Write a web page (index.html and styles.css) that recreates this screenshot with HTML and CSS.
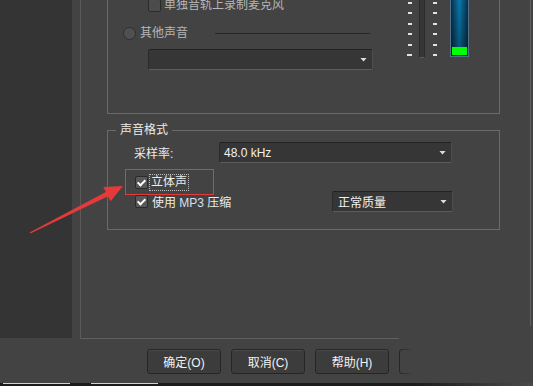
FILE: index.html
```html
<!DOCTYPE html>
<html lang="zh-CN">
<head>
  <meta charset="UTF-8" />
  <meta name="viewport" content="width=device-width, initial-scale=1.0"/>
  <title>录制设置</title>
  <link rel="stylesheet" href="styles.css">
</head>
<body>
  <div class="screen">
    <div class="side"></div>
    <div class="main">
      <div class="frame">
        <div class="group group-top">
          <div class="source-col">
            <div class="row row-mic">
              <span class="check"></span>
              <span class="dim">单独音轨上录制麦克风</span>
            </div>
            <div class="row row-other">
              <span class="radio"></span>
              <span class="dim">其他声音</span>
              <span class="rule"></span>
            </div>
            <div class="select select-source"><span></span><i class="caret"></i></div>
          </div>
          <div class="meter">
            <div class="ticks ticks-left"><i></i><i></i><i></i><i></i><i></i><i></i></div>
            <div class="track"></div>
            <div class="ticks ticks-right"><i></i><i></i><i></i><i></i><i></i><i></i></div>
            <div class="level"><div class="level-fill"></div></div>
          </div>
        </div>

        <fieldset class="group group-format">
          <legend>声音格式</legend>
          <div class="row row-rate">
            <span class="label">采样率:</span>
            <div class="select select-rate"><span>48.0 kHz</span><i class="caret"></i></div>
          </div>
          <div class="row row-check row-stereo">
            <span class="check on"></span>
            <span class="focus">立体声</span>
          </div>
          <div class="row row-check row-mp3">
            <span class="check on"></span>
            <span>使用 <span class="latin">MP3</span> 压缩</span>
            <div class="select select-quality"><span>正常质量</span><i class="caret"></i></div>
          </div>
        </fieldset>
      </div>

      <div class="buttons">
        <button>确定(O)</button>
        <button>取消(C)</button>
        <button>帮助(H)</button>
        <span class="btn-ghost"></span>
      </div>
    </div>
  </div>

  <div class="taskbar">
    <span class="seg"></span>
    <span class="seg seg-2"></span>
  </div>

  <!-- annotation drawn over the screenshot -->
  <div class="note-box"></div>
  <svg class="note-arrow" width="533" height="386" viewBox="0 0 533 386">
    <polygon points="123,186 110.5,201.3 108,196.3 30.4,233.6 29.6,232.4 105.8,191.9 103.3,186.9" fill="#e53a3a"/>
  </svg>
</body>
</html>
```

FILE: styles.css
```css
body {
  margin: 0;
  width: 533px;
  height: 386px;
  overflow: hidden;
  position: relative;
  background: #434343;
  font-family: "Liberation Sans", "Noto Sans CJK SC", sans-serif;
  font-size: 12px;
  color: #ececec;
}
.screen {
  display: flex;
  height: 383px;
}
.side {
  flex: none;
  width: 72px;
  height: 338px;
  background: #343434;
}
.main {
  flex: 1;
  padding-left: 8px;
}
.frame {
  box-sizing: border-box;
  width: 451px;
  height: 339px;
  border-left: 1px solid #5a5a5a;
  padding-left: 26px;
  background:
    linear-gradient(#5f5f5f, #5f5f5f) right top / 1px 326px no-repeat,
    linear-gradient(#5f5f5f, #5f5f5f) left bottom / 318px 1px no-repeat;
}
.group {
  box-sizing: border-box;
  width: 393px;
  border: 1px solid #6a6a6a;
}
.row {
  display: flex;
  align-items: center;
}
.dim {
  color: #b6b6b6;
}

/* top group */
.group-top {
  display: flex;
  height: 114px;
  border-top: none;
}
.source-col {
  width: 299px;
}
.row-mic {
  margin-top: -1px;
  height: 13px;
  line-height: 13px;
  padding-left: 40px;
  gap: 3px;
}
.row-other {
  margin-top: 14px;
  height: 14px;
  line-height: 14px;
  padding-left: 15px;
  gap: 4px;
}
.rule {
  margin-left: 23px;
  width: 155px;
  height: 1px;
  background: #272727;
}
.check {
  flex: none;
  box-sizing: border-box;
  width: 13px;
  height: 13px;
  border: 1px solid #2b2b2b;
  border-radius: 2px;
  background: #4c4c4c;
  position: relative;
}
.check.on {
  background: #585858;
}
.check.on::after {
  content: "";
  position: absolute;
  left: 3px;
  top: 1px;
  width: 3px;
  height: 6px;
  border-right: 2px solid #fff;
  border-bottom: 2px solid #fff;
  transform: rotate(45deg);
}
.radio {
  flex: none;
  box-sizing: border-box;
  width: 13px;
  height: 13px;
  border: 1px solid #2e2e2e;
  border-radius: 50%;
  background: #505050;
}
.select {
  box-sizing: border-box;
  display: flex;
  align-items: center;
  justify-content: space-between;
  height: 21px;
  padding: 0 5px 0 4px;
  background: #363636;
  border: 1px solid;
  border-color: #232323 #4e4e4e #5c5c5c #2a2a2a;
  border-radius: 2px;
  color: #f2f2f2;
}
.caret {
  width: 7px;
  height: 4px;
  background: #dcdcdc;
  clip-path: polygon(0 0, 100% 0, 50% 100%);
}
.select-source {
  margin: 9px 0 0 40px;
  width: 225px;
}

/* level meter */
.meter {
  display: flex;
  align-items: flex-start;
}
.ticks {
  box-sizing: border-box;
  display: flex;
  flex-direction: column;
  justify-content: space-between;
  align-items: flex-end;
  width: 5px;
  height: 56px;
  padding-top: 2px;
}
.ticks i {
  width: 4px;
  height: 2px;
  background: #e2e2e2;
}
.ticks-left i:last-child {
  width: 5px;
}
.ticks-right {
  margin-left: 8px;
  width: 4px;
}
.track {
  box-sizing: border-box;
  margin-left: 7px;
  width: 6px;
  height: 58px;
  background: #363636;
  border: 1px solid #2b2b2b;
  border-top: none;
  border-bottom-color: #5a5a5a;
}
.level {
  box-sizing: border-box;
  display: flex;
  flex-direction: column;
  justify-content: flex-end;
  margin-left: 13px;
  width: 19px;
  height: 57px;
  padding: 0 1px 1px;
  border: 1px solid #56708c;
  border-top: none;
  background:
    linear-gradient(rgba(0,0,0,0), rgba(0,0,0,0.35)),
    linear-gradient(90deg, #062f4a, #0b78ac 50%, #062f4a);
}
.level-fill {
  height: 8px;
  background: #00ff00;
}

/* sound format group */
.group-format {
  margin: 9px 0 0;
  padding: 0 0 17px;
  min-width: 0;
}
.group-format legend {
  margin-left: 8px;
  padding: 0 4px;
  line-height: 14px;
}
.row-rate {
  margin-top: 5px;
  padding-left: 26px;
}
.label {
  width: 85px;
}
.select-rate {
  width: 233px;
}
.row-check {
  padding-left: 27px;
}
.row-stereo {
  margin-top: 11px;
  height: 17px;
  gap: 1px;
}
.focus {
  padding: 0 1px;
  line-height: 15px;
  border: 1px dotted #bdbdbd;
}
.row-mp3 {
  height: 21px;
  gap: 4px;
}
.latin {
  color: #d4e0f2;
}
.select-quality {
  margin: 0 46px 0 auto;
  width: 121px;
  padding-left: 5px;
}

/* dialog buttons */
.buttons {
  display: flex;
  gap: 10px;
  margin-top: 10px;
  padding-left: 67px;
}
button {
  box-sizing: border-box;
  width: 74px;
  height: 25px;
  padding: 0;
  font-family: inherit;
  font-size: 12px;
  color: #f2f2f2;
  background: #3c3c3c;
  border: 1px solid #262626;
  border-radius: 3px;
  box-shadow: inset 0 1px 0 #4a4a4a;
}
.btn-ghost {
  box-sizing: border-box;
  width: 30px;
  height: 25px;
  border: 1px solid #262626;
  border-right: none;
  border-radius: 3px 0 0 3px;
  -webkit-mask-image: linear-gradient(90deg, #000, transparent 14px);
  mask-image: linear-gradient(90deg, #000, transparent 14px);
}

.taskbar {
  display: flex;
  height: 3px;
  background: linear-gradient(90deg, #1c1c1c 78%, #4a4a4a);
}
.seg {
  margin-left: 3px;
  width: 67px;
  height: 1px;
  background: #d2d2d2;
}
.seg-2 {
  margin-left: 21px;
}

/* red annotation */
.note-box {
  position: absolute;
  left: 125px;
  top: 169px;
  box-sizing: border-box;
  width: 89px;
  height: 26px;
  border: 1px solid #e13b3b;
}
.note-arrow {
  position: absolute;
  left: 0;
  top: 0;
  pointer-events: none;
}
```
